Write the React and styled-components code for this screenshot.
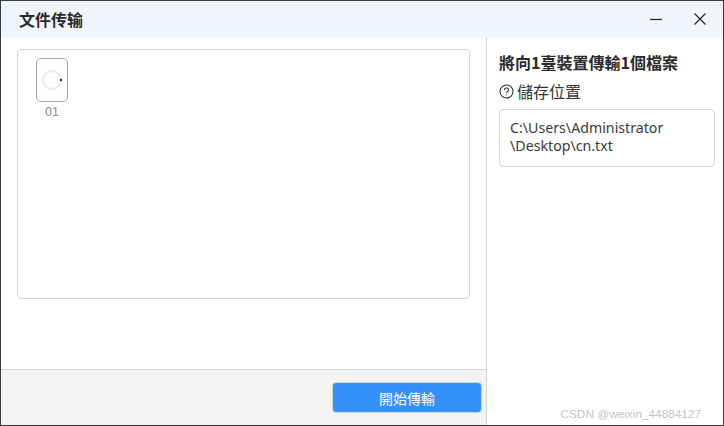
import React from "react";
import styled, { createGlobalStyle } from "styled-components";

const Global = createGlobalStyle`
  html, body { margin: 0; padding: 0; background: #fff; }
  body { font-family: "Noto Sans", "Noto Sans CJK TC", sans-serif; }
  * { box-sizing: border-box; }
`;

const Window = styled.div`
  position: relative;
  width: 724px;
  height: 426px;
  display: flex;
  flex-direction: column;
  border: 1px solid #3a3a3a;
  background: #fff;
  overflow: hidden;
`;

const TitleBar = styled.header`
  height: 36px;
  flex: none;
  display: flex;
  align-items: center;
  justify-content: space-between;
  background: #f1f6fe;
  padding: 0 16px 0 18px;
`;

const Title = styled.h1`
  margin: 0;
  font: 700 16px/20px "Noto Sans CJK SC", sans-serif;
  color: #2b2b2b;
`;

const WindowControls = styled.div`
  display: flex;
  align-items: center;
  gap: 30px;
`;

const ControlIcon = styled.svg`
  width: 14px;
  height: 14px;
  display: block;
  fill: none;
  stroke: #222;
  stroke-width: 1.2;
`;

const Body = styled.div`
  flex: 1;
  display: flex;
  min-height: 0;
`;

const LeftPane = styled.section`
  width: 486px;
  flex: none;
  display: flex;
  flex-direction: column;
  border-right: 1px solid #d2d2d2;
`;

const LeftMain = styled.div`
  flex: 1;
  padding: 12px 16px 0 16px;
`;

const DeviceBox = styled.div`
  width: 453px;
  height: 250px;
  border: 1px solid #d4d4d4;
  border-radius: 4px;
  padding: 8px 18px;
`;

const Device = styled.div`
  width: 32px;
  display: flex;
  flex-direction: column;
  align-items: center;
`;

const DeviceCard = styled.div`
  width: 32px;
  height: 44px;
  border: 1px solid #a5a5a5;
  border-radius: 5px;
  display: flex;
  align-items: center;
  justify-content: center;
`;

const Spinner = styled.svg`
  width: 24px;
  height: 24px;
  display: block;
`;

const DeviceLabel = styled.span`
  margin-top: 2px;
  font: 400 12.5px/16px "Liberation Sans", sans-serif;
  color: #8b8b8b;
`;

const Footer = styled.footer`
  height: 56px;
  flex: none;
  display: flex;
  justify-content: flex-end;
  padding: 12px 4px 0 0;
  background: #f3f3f3;
  border-top: 1px solid #d2d2d2;
`;

const StartButton = styled.button`
  width: 150px;
  height: 31px;
  border: 1px solid #d0d5da;
  border-radius: 4px;
  background: #3490fb;
  color: #fff;
  font: 400 14px/20px "Noto Sans CJK TC", sans-serif;
  padding: 0;
`;

const RightPane = styled.aside`
  flex: 1;
  padding: 13px 8px 0 12px;
  display: flex;
  flex-direction: column;
`;

const Heading = styled.h2`
  margin: 0;
  font: 700 16px/24px "Noto Sans CJK TC", sans-serif;
  color: #2b2b2b;
`;

const LocationRow = styled.div`
  display: flex;
  align-items: center;
  gap: 3px;
  margin-top: 6px;
  height: 22px;
  font: 400 16px/22px "Noto Sans CJK TC", sans-serif;
  color: #333;
`;

const HelpIcon = styled.svg`
  width: 15px;
  height: 15px;
  display: block;
  fill: none;
  stroke: #333;
  stroke-width: 1.1;
`;

const PathBox = styled.div`
  margin-top: 7px;
  height: 58px;
  width: 216px;
  border: 1px solid #d8d8d8;
  border-radius: 4px;
  padding: 9px 10px;
  font: 400 14.2px/18px "Noto Sans", "Noto Sans CJK TC", sans-serif;
  color: #3a3a3a;
`;

const Watermark = styled.span`
  position: absolute;
  right: 22px;
  bottom: 4px;
  font: 400 11.8px/14px "Liberation Sans", sans-serif;
  color: #c4c4c4;
`;

export default function App() {
  return (
    <>
      <Global />
      <Window>
        <TitleBar>
          <Title>文件传输</Title>
          <WindowControls>
            <ControlIcon viewBox="0 0 14 14"><path d="M1 7.5h12" /></ControlIcon>
            <ControlIcon viewBox="0 0 14 14"><path d="M1.5 1.5l11 11M12.5 1.5l-11 11" /></ControlIcon>
          </WindowControls>
        </TitleBar>
        <Body>
          <LeftPane>
            <LeftMain>
              <DeviceBox>
                <Device>
                  <DeviceCard>
                    <Spinner viewBox="0 0 24 24">
                      <circle cx="12" cy="12" r="9" fill="none" stroke="#eeeeee" strokeWidth="2.6" />
                      <circle cx="21" cy="12" r="1.3" fill="#1d3a66" />
                    </Spinner>
                  </DeviceCard>
                  <DeviceLabel>01</DeviceLabel>
                </Device>
              </DeviceBox>
            </LeftMain>
            <Footer>
              <StartButton>開始傳輸</StartButton>
            </Footer>
          </LeftPane>
          <RightPane>
            <Heading>將向1臺裝置傳輸1個檔案</Heading>
            <LocationRow>
              <HelpIcon viewBox="0 0 15 15">
                <circle cx="7.5" cy="7.5" r="6.5" />
                <path d="M5.4 6c0-1.3 1-2 2.1-2s2.1.8 2.1 1.9c0 1.3-2.1 1.6-2.1 3.1" />
                <circle cx="7.5" cy="11" r=".6" fill="#333" stroke="none" />
              </HelpIcon>
              儲存位置
            </LocationRow>
            <PathBox>C:\Users\Administrator<br />\Desktop\cn.txt</PathBox>
          </RightPane>
        </Body>
        <Watermark>CSDN @weixin_44884127</Watermark>
      </Window>
    </>
  );
}
